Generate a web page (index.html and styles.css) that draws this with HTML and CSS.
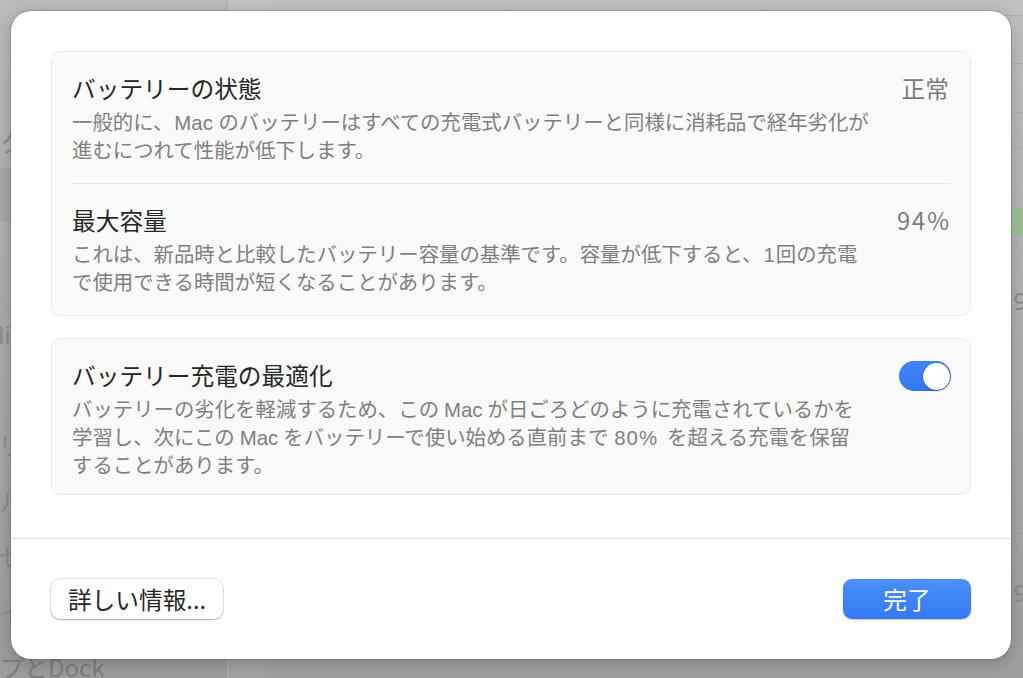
FILE: index.html
```html
<!DOCTYPE html>
<html lang="ja">
<head>
<meta charset="utf-8">
<title>バッテリーの状態</title>
<link rel="stylesheet" href="styles.css">
</head>
<body>
<div class="desktop">
  <aside class="bg-sidebar">
    <div class="side-item">ネットワーク</div>
    <div class="side-item side-sel">バッテリー</div>
    <div class="side-item side-latin">Apple Intelligence</div>
    <div class="side-item side-g3">アクセシビリティ</div>
    <div class="side-item side-g">コントロールセンター</div>
    <div class="side-item side-g">スクリーンセーバ</div>
    <div class="side-item side-g">ディスプレイ</div>
    <div class="side-item side-g">デスクトップとDock</div>
  </aside>
  <div class="bg-strip"></div>
  <main class="bg-main">
    <div class="bg-list">
      <div class="bg-row r1"></div>
      <div class="bg-row r2"></div>
      <div class="bg-row r3"></div>
      <div class="bg-row r4"></div>
      <div class="bg-row r5 plain"><span class="bg-green"></span></div>
      <div class="bg-row r6 plain"><span class="bg-num">9</span></div>
      <div class="bg-row r7"></div>
      <div class="bg-row r8"></div>
      <div class="bg-row r9"></div>
      <div class="bg-row r10"><span class="bg-num">9</span></div>
    </div>
  </main>
</div>

<div class="sheet">
  <div class="sheet-body">
    <section class="card">
      <div class="row">
        <div class="row-text">
          <div class="title">バッテリーの状態</div>
          <div class="desc">一般的に、<span class="lat lat-r">Mac</span> のバッテリーはすべての充電式バッテリーと同様に消耗品で経年劣化が<br>進むにつれて性能が低下します。</div>
        </div>
        <div class="value">正常</div>
      </div>
      <div class="divider"></div>
      <div class="row">
        <div class="row-text">
          <div class="title">最大容量</div>
          <div class="desc">これは、新品時と比較したバッテリー容量の基準です。容量が低下すると、<span class="num">1</span>回の充電<br>で使用できる時間が短くなることがあります。</div>
        </div>
        <div class="value value-num">94%</div>
      </div>
    </section>

    <section class="card">
      <div class="row row-last">
        <div class="row-text">
          <div class="title">バッテリー充電の最適化</div>
          <div class="desc">バッテリーの劣化を軽減するため、この<span class="lat">Mac</span>が日ごろどのように充電されているかを<br>学習し、次にこの<span class="lat">Mac</span>をバッテリーで使い始める直前まで<span class="lat lat-pct">80%</span>を超える充電を保留<br>することがあります。</div>
        </div>
        <div class="toggle on" role="switch" aria-checked="true"><span class="knob"></span></div>
      </div>
    </section>
  </div>

  <footer class="sheet-footer">
    <button class="btn btn-secondary">詳しい情報...</button>
    <button class="btn btn-primary">完了</button>
  </footer>
</div>
</body>
</html>
```

FILE: styles.css
```css
html, body {
  margin: 0;
  padding: 0;
}

body {
  width: 1023px;
  height: 678px;
  overflow: hidden;
  position: relative;
  font-family: "Noto Sans CJK JP", "Noto Sans", sans-serif;
  background: linear-gradient(#c0c0c0, #9e9e9e);
}

/* ---------- background window (dimmed) ---------- */
.desktop {
  display: flex;
  height: 678px;
}

.bg-sidebar {
  width: 227px;
  flex: none;
  display: flex;
  flex-direction: column;
  padding-top: 125px;
  box-sizing: border-box;
  background: linear-gradient(#bbbbbb, #9c9c9c);
  overflow: hidden;
}

.side-item {
  height: 34px;
  line-height: 34px;
  font-size: 24px;
  color: #8d8d8d;
  margin-left: -120px;
  white-space: nowrap;
  flex: none;
}

.side-sel {
  margin-top: 9px;
  height: 53px;
  line-height: 53px;
  margin-left: 0;
  text-indent: -130px;
  background: rgba(0, 0, 0, 0.05);
}

.side-latin {
  margin-top: 97px;
  margin-left: -124px;
  font-family: "Noto Sans", sans-serif;
}

.side-g3 {
  margin-top: 76px;
}

.side-g {
  margin-top: 21.5px;
}

.side-g:last-child {
  color: #7e7e7e;
}

.bg-strip {
  width: 41px;
  flex: none;
  border-left: 1px solid #b0b0b0;
  background: linear-gradient(#c4c4c4, #a2a2a2);
}

.bg-main {
  flex: 1;
  background: linear-gradient(#c1c1c1, #9f9f9f);
  display: flex;
  justify-content: flex-end;
}

.bg-list {
  width: 60px;
  display: flex;
  flex-direction: column;
  padding-top: 15px;
}

.bg-row {
  border-top: 1px solid #b0b0b0;
  box-sizing: border-box;
  flex: none;
  display: flex;
  align-items: center;
  justify-content: flex-end;
}

.bg-row.plain {
  border-top-color: transparent;
}

.r1 { height: 48px; }
.r2 { height: 49px; }
.r3 { height: 35px; }
.r4 { height: 53px; }
.r5 { height: 40px; }
.r6 { height: 120px; }
.r7 { height: 70px; }
.r8 { height: 59px; }
.r9 { height: 41px; }
.r10 { height: 124px; }

.bg-green {
  width: 12px;
  height: 28px;
  background: linear-gradient(90deg, #a4c79c, #9cbf93);
}

.bg-num {
  font-family: "Noto Sans", sans-serif;
  font-size: 24px;
  color: #8a8a8a;
  margin-right: -4px;
}

/* ---------- sheet ---------- */
.sheet {
  position: absolute;
  left: 11px;
  top: 11px;
  width: 1000px;
  height: 648px;
  box-sizing: border-box;
  background: #ffffff;
  border-radius: 20px;
  box-shadow: 0 0 0 1px rgba(0, 0, 0, 0.14), 0 4px 18px rgba(0, 0, 0, 0.22);
  display: flex;
  flex-direction: column;
  overflow: hidden;
}

.sheet-body {
  flex: 1;
  padding: 40px 40px 0;
  display: flex;
  flex-direction: column;
  gap: 22px;
}

.card {
  background: #fafafa;
  border: 1px solid #ebebeb;
  border-radius: 10px;
}

.row {
  display: flex;
  align-items: flex-start;
  gap: 20px;
  padding: 21px 21px 20px 20px;
}

.row-last {
  padding-bottom: 16px;
}

.row-text {
  flex: 1;
  min-width: 0;
}

.title {
  font-size: 23.7px;
  line-height: 30px;
  color: #262626;
  white-space: nowrap;
}

.desc {
  margin-top: 4px;
  font-size: 20.4px;
  line-height: 28px;
  color: #7f7f7f;
  white-space: nowrap;
}

.lat,
.num {
  font-family: "Liberation Sans", "Noto Sans", sans-serif;
  line-height: 1;
}

.lat {
  margin: 0 5px;
}

.lat-r {
  margin-left: 1px;
  margin-right: 1px;
}

.lat-pct {
  margin: 0 9px 0 6px;
  letter-spacing: 1px;
}

.num {
  margin: 0 1px;
}

.value {
  font-size: 23.7px;
  line-height: 30px;
  color: #7a7a7a;
  white-space: nowrap;
}

.value-num {
  letter-spacing: 2px;
  margin-right: -2px;
}

.divider {
  height: 1px;
  margin: 0 20px;
  background: #e6e6e6;
}

/* toggle */
.toggle {
  position: relative;
  width: 52px;
  height: 30px;
  flex: none;
  margin-top: 1px;
  margin-right: -2px;
  border-radius: 15px;
  background: linear-gradient(#3f86f6, #3477ef);
  box-shadow: inset 0 0 0 0.5px rgba(0, 0, 0, 0.12);
}

.knob {
  position: absolute;
  right: 1.5px;
  top: 1.5px;
  width: 27px;
  height: 27px;
  border-radius: 50%;
  background: #ffffff;
  box-shadow: 0 0 0 0.5px rgba(0, 0, 0, 0.15), 0 1px 2px rgba(0, 0, 0, 0.25);
}

/* footer */
.sheet-footer {
  flex: none;
  border-top: 1px solid #e3e3e3;
  padding: 40px 40px;
  display: flex;
  justify-content: space-between;
  align-items: center;
}

.btn {
  height: 40px;
  border: none;
  border-radius: 9px;
  padding: 0;
  font-family: "Noto Sans CJK JP", "Noto Sans", sans-serif;
  font-size: 23.7px;
  line-height: 40px;
  cursor: default;
}

.btn-secondary {
  width: 172px;
  background: #ffffff;
  color: #262626;
  box-shadow: 0 0 0 0.5px rgba(0, 0, 0, 0.14), 0 1px 2px rgba(0, 0, 0, 0.28);
}

.btn-primary {
  width: 128px;
  color: #ffffff;
  background: linear-gradient(#4b8ff8, #3479f4);
  box-shadow: 0 0 0 0.5px rgba(0, 0, 0, 0.08), 0 1px 1.5px rgba(0, 0, 0, 0.18);
}
```
